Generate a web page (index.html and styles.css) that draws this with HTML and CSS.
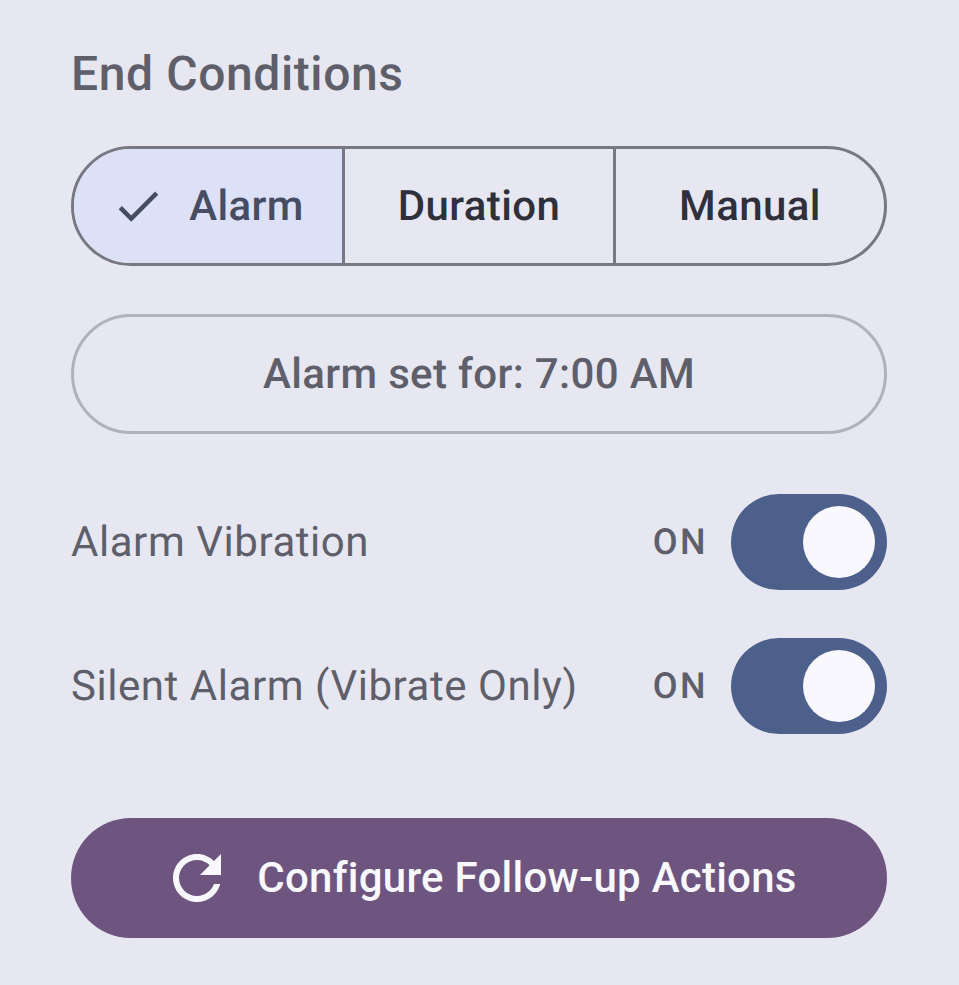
FILE: index.html
```html
<!DOCTYPE html>
<html lang="en">
<head>
  <meta charset="UTF-8" />
  <title>End Conditions</title>
  <link rel="stylesheet" href="styles.css">
</head>
<body>
<main class="panel">
  <h2 class="title">End Conditions</h2>

  <div class="segments">
    <div class="segment selected">
      <svg class="check" viewBox="0 0 24 24"><path d="M9 16.17L4.83 12l-1.42 1.41L9 19 21 7l-1.41-1.41z"/></svg>
      <span>Alarm</span>
    </div>
    <div class="segment">Duration</div>
    <div class="segment">Manual</div>
  </div>

  <div class="alarm-time">Alarm set for: 7:00 AM</div>

  <div class="toggles">
    <div class="toggle-row">
      <span class="toggle-label">Alarm Vibration</span>
      <span class="toggle-state">ON</span>
      <div class="switch"><div class="thumb"></div></div>
    </div>
    <div class="toggle-row">
      <span class="toggle-label">Silent Alarm (Vibrate Only)</span>
      <span class="toggle-state">ON</span>
      <div class="switch"><div class="thumb"></div></div>
    </div>
  </div>

  <button class="action">
    <svg class="refresh" viewBox="0 0 24 24"><path d="M17.65 6.35C16.2 4.9 14.21 4 12 4c-4.42 0-7.99 3.58-7.99 8s3.57 8 7.99 8c3.73 0 6.84-2.55 7.73-6h-2.08c-.82 2.33-3.04 4-5.65 4-3.31 0-6-2.69-6-6s2.69-6 6-6c1.66 0 3.14.69 4.22 1.78L13 11h7V4l-2.35 2.35z"/></svg>
    <span class="action-text">Configure Follow-up Actions</span>
  </button>
</main>
</body>
</html>
```

FILE: styles.css
```css
:root {
  --fundo: #e6e7f1;
  --texto: #5e5f6b;
  --escuro: #2f303c;
  --borda: #777882;
  --azul: #4d5f8b;
  --roxo: #6d557f;
}

* { box-sizing: border-box; margin: 0; padding: 0; }

body {
  font-family: Roboto, sans-serif;
  text-rendering: geometricPrecision;
  background: var(--fundo);
  height: 985px;
  overflow: hidden;
}

.panel {
  padding: 44px 72px 0 71px;
  display: flex;
  flex-direction: column;
}

.title {
  font-size: 48px;
  font-weight: 500;
  line-height: 60px;
  letter-spacing: 0.6px;
  color: var(--texto);
  margin-bottom: 42px;
}

.segments {
  display: flex;
  height: 120px;
  border: 3px solid var(--borda);
  border-radius: 60px;
  overflow: hidden;
}

.segment {
  flex: 1;
  display: flex;
  align-items: center;
  justify-content: center;
  font-size: 42px;
  font-weight: 500;
  letter-spacing: 0.4px;
  color: var(--escuro);
  border-left: 3px solid var(--borda);
}

.segment:first-child { border-left: none; }

.segment.selected {
  background: #dce1f8;
  color: #464c62;
  gap: 24px;
}

.check {
  width: 54px;
  height: 54px;
  margin-left: -1px;
  fill: #464c62;
}

.alarm-time {
  height: 120px;
  margin-top: 48px;
  border: 3px solid #b0b1bf;
  border-radius: 60px;
  display: flex;
  align-items: center;
  justify-content: center;
  font-size: 42px;
  font-weight: 500;
  letter-spacing: 0.35px;
  color: var(--texto);
}

.toggles {
  margin-top: 60px;
  display: flex;
  flex-direction: column;
  gap: 48px;
}

.toggle-row {
  display: flex;
  align-items: center;
  height: 96px;
}

.toggle-label {
  flex: 1;
  font-size: 42px;
  letter-spacing: 0.55px;
  color: var(--texto);
}

.toggle-state {
  font-size: 36px;
  font-weight: 500;
  letter-spacing: 2.4px;
  color: var(--texto);
  margin-right: 23px;
}

.switch {
  width: 156px;
  height: 96px;
  border-radius: 48px;
  background: var(--azul);
  display: flex;
  align-items: center;
  justify-content: flex-end;
  padding-right: 12px;
}

.thumb {
  width: 72px;
  height: 72px;
  border-radius: 50%;
  background: #f9f8ff;
}

.action {
  margin-top: 84px;
  height: 120px;
  border: none;
  border-radius: 60px;
  background: var(--roxo);
  color: #f9f8ff;
  font-family: inherit;
  font-size: 42px;
  font-weight: 500;
  letter-spacing: 0.25px;
  display: flex;
  align-items: center;
  justify-content: center;
  gap: 24px;
}

.action-text { margin-bottom: 2px; }

.refresh {
  width: 72px;
  height: 72px;
  fill: #f9f8ff;
}
```
